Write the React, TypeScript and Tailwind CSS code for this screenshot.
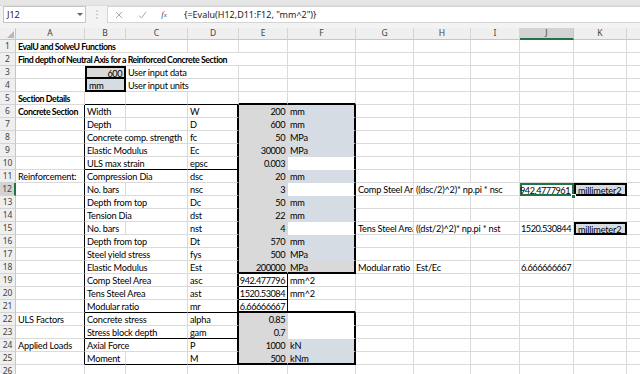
import React from "react";

type Cell = {
  t?: string;
  span?: number;
  a?: "r" | "l";
  b?: boolean;
  bg?: string;
  r?: string;
  bb?: string;
  full?: string;
  clip?: boolean;
};

const W = [69, 41, 62, 51, 49, 68, 58, 57, 49, 54, 53, 80];
const COLS = ["A", "B", "C", "D", "E", "F", "G", "H", "I", "J", "K", "L"];

const GRAY = "bg-[#d9d9d9]";
const BLUE = "bg-[#d6dce4]";
const WHITE = "bg-white";
const TR = "border-r-2 border-r-black";
const TB = "border-b-2 border-b-black";
const MR = "border-r border-r-black";
const MB = "border-b border-b-black";
const NR = "border-r border-r-transparent";
const NB = "border-b border-b-transparent";

type RowDef = Partial<Record<string, Cell>>;

const boxE = (e: string, f: string, fbg: string, last = false): RowDef => ({
  E: { t: e, a: "r", bg: GRAY, r: NR, bb: last ? TB : NB },
  F: { t: f, bg: fbg, r: TR, bb: last ? TB : NB },
});

const rows: RowDef[] = [
  { A: { t: "EvalU and SolveU Functions", b: true, span: 3 } },
  {
    A: { t: "Find depth of Neutral Axis for a Reinforced Concrete Section", b: true, span: 5 },
  },
  {
    A: { r: "border-r-0" },
    B: { t: "600", a: "r", bg: GRAY, full: "border-2 border-black" },
    C: { t: "User input data", span: 2 },
  },
  {
    A: { r: "border-r-0" },
    B: { t: "mm", bg: BLUE, full: "border-x-2 border-b-2 border-black" },
    C: { t: "User input units", span: 2 },
  },
  {
    A: { t: "Section Details", b: true },
    B: { bb: MB },
    C: { bb: MB },
    D: { bb: MB },
    E: { bb: TB },
    F: { bb: TB },
  },
  {
    A: { t: "Concrete Section", b: true, r: MR },
    B: { t: "Width" },
    D: { t: "W", r: TR },
    ...boxE("200", "mm", BLUE),
  },
  { A: { r: MR }, B: { t: "Depth" }, D: { t: "D", r: TR }, ...boxE("600", "mm", BLUE) },
  {
    A: { r: MR },
    B: { t: "Concrete comp. strength", span: 2 },
    D: { t: "fc", r: TR },
    ...boxE("50", "MPa", BLUE),
  },
  {
    A: { r: MR },
    B: { t: "Elastic Modulus", span: 2 },
    D: { t: "Ec", r: TR },
    ...boxE("30000", "MPa", BLUE),
  },
  {
    A: { r: MR },
    B: { t: "ULS max strain", span: 2, bb: MB },
    D: { t: "epsc", r: TR, bb: MB },
    ...boxE("0.003", "", WHITE),
  },
  {
    A: { t: "Reinforcement:", r: MR },
    B: { t: "Compression Dia", span: 2 },
    D: { t: "dsc", r: TR },
    ...boxE("20", "mm", BLUE),
  },
  {
    A: { r: MR },
    B: { t: "No. bars" },
    D: { t: "nsc", r: TR },
    ...boxE("3", "", WHITE),
    G: { t: "Comp Steel Area", clip: true },
    H: { t: "((dsc/2)^2)* np.pi * nsc", span: 2 },
    J: { t: "942.4777961", a: "r", full: "border-2 border-[#217346]" },
    K: { t: "millimeter2", bg: BLUE, full: "border-2 border-black" },
  },
  {
    A: { r: MR },
    B: { t: "Depth from top", span: 2 },
    D: { t: "Dc", r: TR },
    ...boxE("50", "mm", BLUE),
  },
  {
    A: { r: MR },
    B: { t: "Tension Dia", span: 2 },
    D: { t: "dst", r: TR },
    ...boxE("22", "mm", BLUE),
  },
  {
    A: { r: MR },
    B: { t: "No. bars" },
    D: { t: "nst", r: TR },
    ...boxE("4", "", WHITE),
    G: { t: "Tens Steel Area", clip: true },
    H: { t: "((dst/2)^2)* np.pi * nst", span: 2 },
    J: { t: "1520.530844", a: "r" },
    K: { t: "millimeter2", bg: BLUE, full: "border-2 border-black" },
  },
  {
    A: { r: MR },
    B: { t: "Depth from top", span: 2 },
    D: { t: "Dt", r: TR },
    ...boxE("570", "mm", BLUE),
  },
  {
    A: { r: MR },
    B: { t: "Steel yield stress", span: 2 },
    D: { t: "fys", r: TR },
    ...boxE("500", "MPa", BLUE),
  },
  {
    A: { r: MR },
    B: { t: "Elastic Modulus", span: 2 },
    D: { t: "Est", r: TR },
    ...boxE("200000", "MPa", GRAY, true),
    G: { t: "Modular ratio" },
    H: { t: "Est/Ec" },
    J: { t: "6.666666667", a: "r" },
  },
  {
    A: { r: MR },
    B: { t: "Comp Steel Area", span: 2 },
    D: { t: "asc", r: TR },
    E: { t: "942.477796", a: "r", r: MR, bb: MB },
    F: { t: "mm^2" },
  },
  {
    A: { r: MR },
    B: { t: "Tens Steel Area", span: 2 },
    D: { t: "ast", r: TR },
    E: { t: "1520.53084", a: "r", r: MR, bb: MB },
    F: { t: "mm^2" },
  },
  {
    A: { r: MR },
    B: { t: "Modular ratio", span: 2, bb: MB },
    D: { t: "mr", r: TR, bb: MB },
    E: { t: "6.66666667", a: "r", r: MR, bb: TB },
    F: { bb: TB },
  },
  {
    A: { t: "ULS Factors", r: MR },
    B: { t: "Concrete stress", span: 2 },
    D: { t: "alpha", r: TR },
    ...boxE("0.85", "", WHITE),
  },
  {
    A: { r: MR },
    B: { t: "Stress block depth", span: 2, bb: MB },
    D: { t: "gam", r: TR, bb: MB },
    ...boxE("0.7", "", WHITE),
  },
  {
    A: { t: "Applied Loads", r: MR },
    B: { t: "Axial Force", span: 2 },
    D: { t: "P", r: TR },
    ...boxE("1000", "kN", BLUE),
  },
  {
    A: { r: MR },
    B: { t: "Moment", bb: MB },
    C: { bb: MB },
    D: { t: "M", r: TR, bb: MB },
    ...boxE("500", "kNm", BLUE, true),
  },
  {},
];

function Row({ def, n }: { def: RowDef; n: number }) {
  const cells: React.ReactNode[] = [];
  let i = 0;
  while (i < COLS.length) {
    const key = COLS[i];
    const c: Cell = def[key] ?? {};
    const span = c.span ?? 1;
    let w = 0;
    for (let k = 0; k < span; k++) w += W[i + k] ?? 0;
    const borders = c.full
      ? c.full
      : `${c.r ?? "border-r border-r-[#dadada]"} ${c.bb ?? "border-b border-b-[#dadada]"}`;
    cells.push(
      <div
        key={key}
        className={`shrink-0 h-full flex items-center px-[2px] whitespace-nowrap ${
          c.clip ? "overflow-hidden" : "overflow-visible"
        } ${c.a === "r" ? "justify-end tracking-[-0.5px]" : "justify-start"} ${
          c.b ? "font-bold text-[8.8px] tracking-[-0.45px]" : ""
        } ${c.bg ?? ""} ${borders}`}
        style={{ width: w }}
      >
        <span className="leading-[11px] pt-[1px]">{c.t ?? ""}</span>
      </div>
    );
    i += span;
  }
  const active = n === 12;
  return (
    <div className="flex h-[13px] shrink-0">
      <div
        className={`shrink-0 w-[16px] h-full flex items-center justify-center text-[8.5px] tracking-normal text-[#444] border-b border-b-[#d4d4d4] ${
          active
            ? "bg-[#d3d3d3] border-r-2 border-r-[#217346]"
            : "bg-[#efefef] border-r border-r-[#c6c6c6]"
        } font-['Noto_Sans',sans-serif]`}
      >
        {n}
      </div>
      {cells}
    </div>
  );
}

export default function App() {
  return (
    <div className="w-[640px] h-[374px] overflow-hidden bg-white flex flex-col font-['Lato',sans-serif] text-[9.2px] tracking-[-0.2px] text-black relative">
      <div className="h-[6px] shrink-0 bg-[#e6e6e6] border-b border-b-[#dcdcdc]" />
      <div className="h-[17px] shrink-0 flex bg-[#f3f3f3] font-['Noto_Sans',sans-serif] tracking-normal">
        <div className="ml-[3px] w-[83px] h-full bg-white border border-[#c6c6c6] flex items-center justify-between pl-[3px] pr-[2px]">
          <span className="text-[9px] text-[#222]">J12</span>
          <svg width="6" height="4" viewBox="0 0 6 4">
            <path d="M0 0 L6 0 L3 3 Z" fill="#666" />
          </svg>
        </div>
        <div className="w-[21px] h-full flex items-center justify-center">
          <svg width="2" height="9" viewBox="0 0 2 9">
            <circle cx="1" cy="1" r="0.8" fill="#b0b0b0" />
            <circle cx="1" cy="4.5" r="0.8" fill="#b0b0b0" />
            <circle cx="1" cy="8" r="0.8" fill="#b0b0b0" />
          </svg>
        </div>
        <div className="flex-1 h-full bg-white border border-[#d4d4d4] border-r-0 flex items-center">
          <div className="w-[22px] flex justify-center">
            <svg width="8" height="8" viewBox="0 0 8 8">
              <path d="M1 1 L7 7 M7 1 L1 7" stroke="#a8a8a8" strokeWidth="1" />
            </svg>
          </div>
          <div className="w-[24px] flex justify-center">
            <svg width="9" height="8" viewBox="0 0 9 8">
              <path d="M1 4.5 L3.5 7 L8 1" stroke="#a8a8a8" strokeWidth="1" fill="none" />
            </svg>
          </div>
          <div className="w-[20px] flex justify-center">
            <span className="italic text-[9px] text-[#555] font-['Liberation_Serif',serif]">
              f<span className="text-[7px]">x</span>
            </span>
          </div>
          <span className="ml-[10px] text-[9px] text-[#222] whitespace-nowrap">
            {'{=Evalu(H12,D11:F12, "mm^2")}'}
          </span>
        </div>
      </div>
      <div className="h-[5px] shrink-0 bg-[#f3f3f3]" />
      <div className="flex h-[12px] shrink-0 bg-[#efefef] font-['Noto_Sans',sans-serif] tracking-normal text-[8.5px] text-[#444]">
        <div className="w-[16px] shrink-0 h-full border-r border-r-[#c6c6c6] border-b border-b-[#c6c6c6] flex items-end justify-end p-[1px]">
          <svg width="7" height="7" viewBox="0 0 7 7">
            <path d="M7 0 L7 7 L0 7 Z" fill="#b7b7b7" />
          </svg>
        </div>
        {COLS.map((c, i) => (
          <div
            key={c}
            className={`shrink-0 h-full flex items-center justify-center ${
              c === "J"
                ? "bg-[#d3d3d3] border-b-2 border-b-[#217346] border-r border-r-[#c6c6c6]"
                : "border-b border-b-[#c6c6c6] border-r border-r-[#d4d4d4]"
            }`}
            style={{ width: W[i] }}
          >
            {c}
          </div>
        ))}
      </div>
      {rows.map((r, i) => (
        <Row key={i} def={r} n={i + 1} />
      ))}
      <div className="absolute left-[571px] top-[194px] w-[5px] h-[5px] bg-[#217346] border border-white" />
    </div>
  );
}
